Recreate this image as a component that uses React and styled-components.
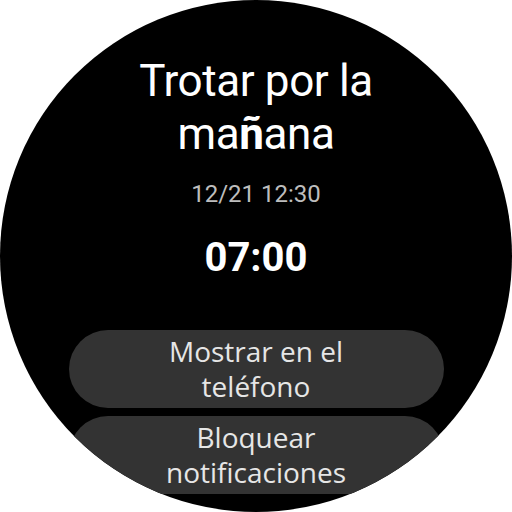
import React from "react"
import styled, { createGlobalStyle } from "styled-components"

const GlobalStyle = createGlobalStyle`
  html, body {
    margin: 0;
    padding: 0;
    background: #fff;
  }
  body {
    font-family: Roboto, "Noto Sans", sans-serif;
  }
`

const Watch = styled.div`
  width: 512px;
  height: 512px;
  border-radius: 50%;
  background: #000;
  overflow: hidden;
  display: flex;
  flex-direction: column;
  align-items: center;
  padding-top: 55px;
  box-sizing: border-box;
`

const Title = styled.h1`
  margin: 0;
  width: 300px;
  color: #fff;
  font-size: 44px;
  font-weight: 400;
  line-height: 53px;
  letter-spacing: -0.4px;
  text-align: center;
`

const Fallback = styled.span`
  font-weight: 700;
`

const DateLine = styled.div`
  margin-top: 18px;
  color: #bdbdbd;
  font-size: 24px;
  line-height: 30px;
`

const Duration = styled.div`
  margin-top: 27px;
  color: #fff;
  font-size: 40px;
  font-weight: 700;
  line-height: 44px;
`

const Actions = styled.div`
  margin-top: 50px;
  display: flex;
  flex-direction: column;
  gap: 8px;
`

const Action = styled.button`
  width: 375px;
  height: 78px;
  border: none;
  border-radius: 39px;
  background: #333333;
  color: #e6e6e6;
  font-family: "Open Sans", Roboto, sans-serif;
  font-size: 28px;
  line-height: 35px;
  padding: 4px 60px;
  text-align: center;
`

export default function App() {
  return (
    <>
      <GlobalStyle />
      <Watch>
        <Title>
          Trotar por la ma<Fallback>ñ</Fallback>ana
        </Title>
        <DateLine>12/21 12:30</DateLine>
        <Duration>07:00</Duration>
        <Actions>
          <Action>Mostrar en el teléfono</Action>
          <Action>Bloquear notificaciones</Action>
        </Actions>
      </Watch>
    </>
  )
}
